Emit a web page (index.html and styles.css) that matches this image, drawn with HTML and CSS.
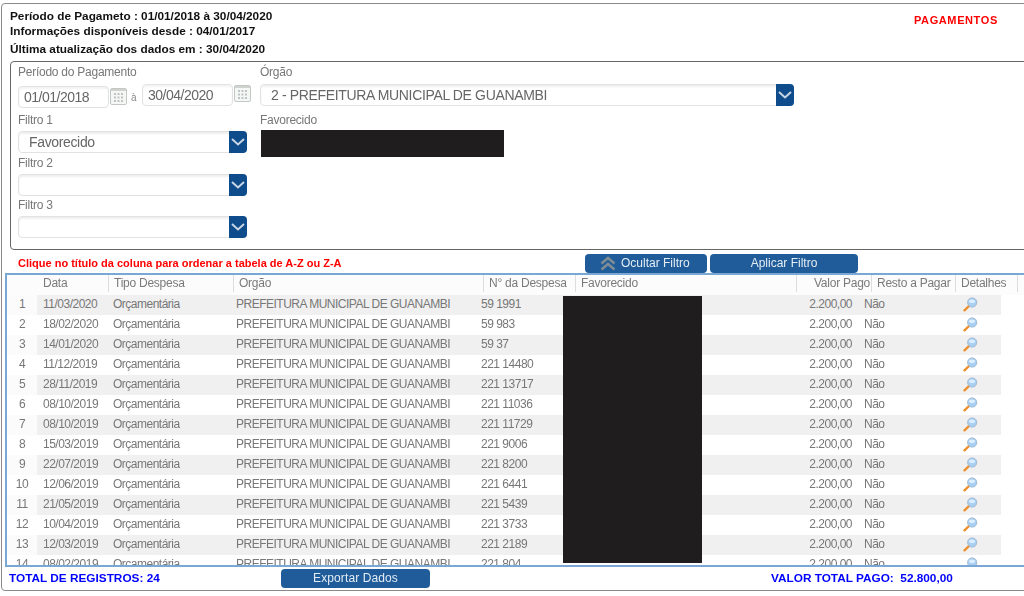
FILE: index.html
```html
<!DOCTYPE html>
<html lang="pt-BR">
<head>
<meta charset="utf-8">
<title>Pagamentos</title>
<link rel="stylesheet" href="styles.css">
</head>
<body>
<svg class="defs" width="0" height="0" aria-hidden="true">
  <defs>
    <symbol id="cal" viewBox="0 0 17 18">
      <rect x="0.5" y="1.5" width="16" height="16" rx="1.5" fill="#f5f7f5" stroke="#c4c8c4"/>
      <path d="M1 2h15v2H1z" fill="#cfd3cf"/>
      <path d="M4 6h2v2H4zM7.5 6h2v2h-2zM11 6h2v2h-2zM4 9.500h2v2H4zM7.500 9.500h2v2h-2zM11 9.500h2v2h-2zM4 13h2v2H4zM7.500 13h2v2h-2zM11 13h2v2h-2z" fill="#bcc2c6"/>
    </symbol>
    <symbol id="lupa" viewBox="0 0 15 15">
      <path d="M6 9 1.500 13.300" stroke="#ee8f2c" stroke-width="2.400" stroke-linecap="round"/>
      <circle cx="9.200" cy="5.500" r="4.600" fill="#a9d0f2" stroke="#9fb8cf"/>
      <ellipse cx="9" cy="4.300" rx="3" ry="1.800" fill="#dceeff"/>
    </symbol>
    <symbol id="chev" viewBox="0 0 18 21">
      <path d="M3 8l6 5.500L15 8" fill="none" stroke="#c9d6e4" stroke-width="2"/>
    </symbol>
  </defs>
</svg>
<main class="page">
  <header class="head">
    <div class="info">
      <p class="info-a">Período de Pagameto : 01/01/2018 à 30/04/2020</p>
      <p class="info-b">Informações disponíveis desde : 04/01/2017</p>
      <p class="info-c">Última atualização dos dados em : 30/04/2020</p>
    </div>
    <div class="title">PAGAMENTOS</div>
  </header>

  <section class="filters">
    <div class="col-left">
      <label class="lab">Período do Pagamento</label>
      <div class="dates">
        <span class="input date-low">01/01/2018</span>
        <svg class="cal cal-low"><use href="#cal"/></svg>
        <span class="a-sep">à</span>
        <span class="input">30/04/2020</span>
        <svg class="cal"><use href="#cal"/></svg>
      </div>
      <label class="lab lab-f1">Filtro 1</label>
      <div class="select s-left"><span>Favorecido</span><b class="drop"><svg><use href="#chev"/></svg></b></div>
      <label class="lab lab-f2">Filtro 2</label>
      <div class="select s-left"><span></span><b class="drop"><svg><use href="#chev"/></svg></b></div>
      <label class="lab lab-f3">Filtro 3</label>
      <div class="select s-left"><span></span><b class="drop"><svg><use href="#chev"/></svg></b></div>
    </div>
    <div class="col-right">
      <label class="lab">Órgão</label>
      <div class="select s-org"><span>2 - PREFEITURA MUNICIPAL DE GUANAMBI</span><b class="drop"><svg><use href="#chev"/></svg></b></div>
      <label class="lab lab-fav">Favorecido</label>
      <div class="redact-field"></div>
    </div>
  </section>

  <div class="toolbar">
    <p class="hint">Clique no título da coluna para ordenar a tabela de A-Z ou Z-A</p>
    <button class="btn btn-hide">
      <svg width="16" height="15" viewBox="0 0 16 15"><path d="M1.500 7.500l6.500-5.500 6.500 5.500M1.500 13.500l6.500-5.500 6.500 5.500" fill="none" stroke="#7f8c94" stroke-width="2.600"/></svg>
      Ocultar Filtro
    </button>
    <button class="btn btn-apply">Aplicar Filtro</button>
  </div>

  <section class="grid-box">
    <div class="thead">
      <span class="th th-data">Data</span>
      <span class="th th-tipo">Tipo Despesa</span>
      <span class="th th-org">Orgão</span>
      <span class="th th-num">N° da Despesa</span>
      <span class="th th-fav">Favorecido</span>
      <span class="th th-val">Valor Pago</span>
      <span class="th th-resto">Resto a Pagar</span>
      <span class="th th-det">Detalhes</span>
      <span class="th th-end"></span>
    </div>
    <div class="tbody">
      <div class="row"><span class="idx">1</span><span>11/03/2020</span><span>Orçamentária</span><span>PREFEITURA MUNICIPAL DE GUANAMBI</span><span>59 1991</span><span></span><span class="val">2.200,00</span><span>Não</span><span class="det"><svg class="lupa"><use href="#lupa"/></svg></span></div>
      <div class="row"><span class="idx">2</span><span>18/02/2020</span><span>Orçamentária</span><span>PREFEITURA MUNICIPAL DE GUANAMBI</span><span>59 983</span><span></span><span class="val">2.200,00</span><span>Não</span><span class="det"><svg class="lupa"><use href="#lupa"/></svg></span></div>
      <div class="row"><span class="idx">3</span><span>14/01/2020</span><span>Orçamentária</span><span>PREFEITURA MUNICIPAL DE GUANAMBI</span><span>59 37</span><span></span><span class="val">2.200,00</span><span>Não</span><span class="det"><svg class="lupa"><use href="#lupa"/></svg></span></div>
      <div class="row"><span class="idx">4</span><span>11/12/2019</span><span>Orçamentária</span><span>PREFEITURA MUNICIPAL DE GUANAMBI</span><span>221 14480</span><span></span><span class="val">2.200,00</span><span>Não</span><span class="det"><svg class="lupa"><use href="#lupa"/></svg></span></div>
      <div class="row"><span class="idx">5</span><span>28/11/2019</span><span>Orçamentária</span><span>PREFEITURA MUNICIPAL DE GUANAMBI</span><span>221 13717</span><span></span><span class="val">2.200,00</span><span>Não</span><span class="det"><svg class="lupa"><use href="#lupa"/></svg></span></div>
      <div class="row"><span class="idx">6</span><span>08/10/2019</span><span>Orçamentária</span><span>PREFEITURA MUNICIPAL DE GUANAMBI</span><span>221 11036</span><span></span><span class="val">2.200,00</span><span>Não</span><span class="det"><svg class="lupa"><use href="#lupa"/></svg></span></div>
      <div class="row"><span class="idx">7</span><span>08/10/2019</span><span>Orçamentária</span><span>PREFEITURA MUNICIPAL DE GUANAMBI</span><span>221 11729</span><span></span><span class="val">2.200,00</span><span>Não</span><span class="det"><svg class="lupa"><use href="#lupa"/></svg></span></div>
      <div class="row"><span class="idx">8</span><span>15/03/2019</span><span>Orçamentária</span><span>PREFEITURA MUNICIPAL DE GUANAMBI</span><span>221 9006</span><span></span><span class="val">2.200,00</span><span>Não</span><span class="det"><svg class="lupa"><use href="#lupa"/></svg></span></div>
      <div class="row"><span class="idx">9</span><span>22/07/2019</span><span>Orçamentária</span><span>PREFEITURA MUNICIPAL DE GUANAMBI</span><span>221 8200</span><span></span><span class="val">2.200,00</span><span>Não</span><span class="det"><svg class="lupa"><use href="#lupa"/></svg></span></div>
      <div class="row"><span class="idx">10</span><span>12/06/2019</span><span>Orçamentária</span><span>PREFEITURA MUNICIPAL DE GUANAMBI</span><span>221 6441</span><span></span><span class="val">2.200,00</span><span>Não</span><span class="det"><svg class="lupa"><use href="#lupa"/></svg></span></div>
      <div class="row"><span class="idx">11</span><span>21/05/2019</span><span>Orçamentária</span><span>PREFEITURA MUNICIPAL DE GUANAMBI</span><span>221 5439</span><span></span><span class="val">2.200,00</span><span>Não</span><span class="det"><svg class="lupa"><use href="#lupa"/></svg></span></div>
      <div class="row"><span class="idx">12</span><span>10/04/2019</span><span>Orçamentária</span><span>PREFEITURA MUNICIPAL DE GUANAMBI</span><span>221 3733</span><span></span><span class="val">2.200,00</span><span>Não</span><span class="det"><svg class="lupa"><use href="#lupa"/></svg></span></div>
      <div class="row"><span class="idx">13</span><span>12/03/2019</span><span>Orçamentária</span><span>PREFEITURA MUNICIPAL DE GUANAMBI</span><span>221 2189</span><span></span><span class="val">2.200,00</span><span>Não</span><span class="det"><svg class="lupa"><use href="#lupa"/></svg></span></div>
      <div class="row"><span class="idx">14</span><span>08/02/2019</span><span>Orçamentária</span><span>PREFEITURA MUNICIPAL DE GUANAMBI</span><span>221 804</span><span></span><span class="val">2.200,00</span><span>Não</span><span class="det"><svg class="lupa"><use href="#lupa"/></svg></span></div>
    </div>
    <div class="redact-col"></div>
  </section>

  <footer class="foot">
    <span class="total">TOTAL DE REGISTROS: 24</span>
    <button class="btn btn-export">Exportar Dados</button>
    <span class="sum">VALOR TOTAL PAGO:&nbsp; 52.800,00</span>
  </footer>
</main>
</body>
</html>
```

FILE: styles.css
```css
* { box-sizing: border-box; }
html, body { margin: 0; padding: 0; height: 596px; overflow: hidden; background: #fff; }
body { font-family: "Liberation Sans", Arial, sans-serif; color: #777; }
p { margin: 0; }
.defs { position: absolute; }

.page {
  width: 1060px;
  height: 588px;
  margin: 3px 0 0 1px;
  border: 1px solid #8a8a8a;
  border-radius: 4px;
  display: flex;
  flex-direction: column;
  filter: blur(0.5px);
}

.head { display: flex; justify-content: flex-start; height: 57px; padding: 5px 0 0 8px; }
.info { width: 904px; font-size: 11.8px; font-weight: bold; color: #111; }
.info-a { height: 15px; line-height: 15px; }
.info-b { height: 16px; line-height: 14px; }
.info-c { height: 17px; line-height: 18px; }
.title { margin-top: 5px; font-size: 11px; font-weight: bold; color: #f00; letter-spacing: 0.6px; }

.filters {
  margin-left: 8px;
  height: 189px;
  border: 1px solid #666;
  border-radius: 4px;
  display: flex;
  padding: 3px 0 0 7px;
}
.col-left { width: 242px; }
.lab { display: block; height: 14px; line-height: 14px; font-size: 12px; letter-spacing: -0.25px; color: #777; }
.lab-f1 { margin-top: 5px; }
.lab-f2 { margin-top: 3px; }
.lab-f3 { margin-top: 2px; }
.lab-fav { margin-top: 7px; }

.dates { display: flex; align-items: flex-start; margin-top: 5px; height: 24px; }
.input {
  width: 91px;
  height: 22px;
  border: 1px solid #e2e2e2;
  border-radius: 4px;
  font-size: 14px;
  letter-spacing: -0.5px;
  line-height: 20px;
  padding-left: 5px;
  color: #666;
  box-shadow: inset 0 2px 2px #f3f3f3;
}
.date-low { margin-top: 2px; padding-left: 5px; }
.cal { width: 17px; height: 18px; margin: 0 1px 0 1px; flex: none; }
.cal-low { margin-top: 3px; }
.a-sep { width: 14px; padding-left: 3px; font-size: 10px; margin-top: 8px; color: #888; }

.select {
  display: flex;
  justify-content: space-between;
  height: 22px;
  border: 1px solid #e2e2e2;
  border-radius: 4px;
  font-size: 14px;
  letter-spacing: -0.35px;
  line-height: 21px;
  color: #666;
  box-shadow: inset 0 2px 2px #efefef;
}
.select span { padding-left: 10px; }
.s-left { width: 229px; margin-top: 4px; }
.s-org { width: 534px; margin-top: 5px; }
.drop {
  width: 18px;
  height: 22px;
  margin: -1px -1px 0 0;
  background: #0f4c8c;
  border-radius: 0 4px 4px 0;
  display: block;
}
.drop svg { display: block; width: 18px; height: 21px; }
.redact-field { width: 243px; height: 27px; margin: 3px 0 0 1px; background: #1f1d1e; }

.toolbar { display: flex; align-items: flex-start; height: 23px; padding-top: 4px; }
.hint { width: 583px; padding-left: 16px; font-size: 11px; font-weight: bold; color: #f00; line-height: 19px; }
.btn {
  height: 19px;
  border: 0;
  padding: 0;
  border-radius: 4px;
  background: #1f5c99;
  color: #e4edf5;
  font-family: inherit;
  font-size: 12px;
  line-height: 19px;
}
.btn-hide { width: 122px; display: flex; align-items: center; padding-left: 15px; gap: 5px; }
.btn-apply { width: 148px; margin-left: 3px; }

.grid-box {
  position: relative;
  margin-left: 3px;
  height: 294px;
  border: 2px solid #7aa7d4;
  overflow: hidden;
}
.thead { position: relative; height: 20px; background: #fcfcfc; font-size: 12px; letter-spacing: -0.25px; line-height: 16px; }
.th { position: absolute; top: 0; height: 17px; color: #7a7a7a; border-left: 1px solid #ddd; padding-left: 5px; white-space: nowrap; }
.th-data { left: 30px; border-left: 0; padding-left: 6px; }
.th-tipo { left: 101px; }
.th-org { left: 226px; }
.th-num { left: 476px; }
.th-fav { left: 568px; }
.th-val { left: 789px; padding-left: 17px; }
.th-resto { left: 864px; }
.th-det { left: 948px; }
.th-end { left: 1010px; }

.row {
  display: grid;
  grid-template-columns: 30px 72px 123px 245px 86px 140px 150px 103px 40px;
  width: 994px;
  height: 20px;
  font-size: 12px;
  letter-spacing: -0.5px;
  line-height: 18px;
  color: #777;
  white-space: nowrap;
}
.row:nth-child(odd) { background: #f0f0f0; }
.row span { padding-left: 4px; overflow: visible; }
.row span:nth-child(2) { padding-left: 6px; }
.row .idx { padding-left: 0; text-align: center; background: #fbfbfb; color: #777; }
.row:nth-child(even) .idx { background: #fff; }
.row .val { padding: 0 1px 0 0; text-align: right; }
.row span:nth-child(8) { padding-left: 11px; }
.row .det { padding-left: 7px; }
.lupa { display: block; width: 15px; height: 15px; margin-top: 2px; }
.redact-col { position: absolute; left: 556px; top: 21px; width: 139px; height: 267px; background: #1f1d1e; }

.foot { display: flex; align-items: flex-start; height: 23px; padding-top: 2px; font-size: 11.8px; font-weight: bold; color: #00f; }
.total { width: 279px; padding-left: 7px; line-height: 19px; }
.btn-export { width: 149px; font-weight: normal; letter-spacing: 0.1px; }
.sum { margin-left: 341px; line-height: 19px; }
```
